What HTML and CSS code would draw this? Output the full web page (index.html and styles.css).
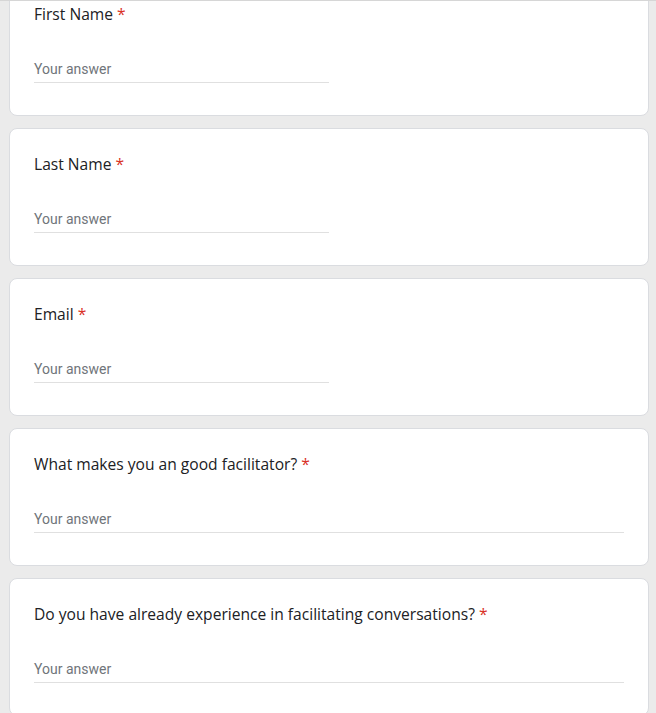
FILE: index.html
```html
<!DOCTYPE html>
<html lang="en">
<head>
<meta charset="utf-8">
<title>Form</title>
<link rel="stylesheet" href="styles.css">
</head>
<body>
<div class="viewport">
  <main class="form">
    <section class="card first">
      <div class="title">First Name <span class="req">*</span></div>
      <div class="answer half">Your answer</div>
    </section>
    <section class="card">
      <div class="title">Last Name <span class="req">*</span></div>
      <div class="answer half">Your answer</div>
    </section>
    <section class="card">
      <div class="title">Email <span class="req">*</span></div>
      <div class="answer half">Your answer</div>
    </section>
    <section class="card">
      <div class="title">What makes you an good facilitator? <span class="req">*</span></div>
      <div class="answer full">Your answer</div>
    </section>
    <section class="card">
      <div class="title">Do you have already experience in facilitating conversations? <span class="req">*</span></div>
      <div class="answer full">Your answer</div>
    </section>
  </main>
</div>
</body>
</html>
```

FILE: styles.css
```css
html, body {
  margin: 0;
  padding: 0;
  background: #ebebeb;
}
.viewport {
  height: 713px;
  overflow: hidden;
  border-top: 1px solid #d6d6d6;
  box-sizing: border-box;
}
.form {
  display: flex;
  flex-direction: column;
  gap: 12px;
  width: 640px;
  margin-left: 9px;
}
.card {
  background: #fff;
  border: 1px solid #dadce0;
  border-radius: 8px;
  padding: 23px 24px 32px;
  display: flex;
  flex-direction: column;
  gap: 33px;
}
.card.first {
  margin-top: -23px;
}
.title {
  font-family: "Open Sans", "Inter", sans-serif;
  font-size: 15.6px;
  line-height: 24px;
  color: #202124;
  letter-spacing: 0;
}
.req {
  color: #d93025;
}
.answer {
  font-family: Roboto, "Liberation Sans", sans-serif;
  font-size: 14px;
  line-height: 20px;
  color: #70757a;
  padding-bottom: 3px;
  border-bottom: 1px solid #e0e0e0;
}
.answer.half {
  width: 50%;
}
.answer.full {
  width: 100%;
}
```
